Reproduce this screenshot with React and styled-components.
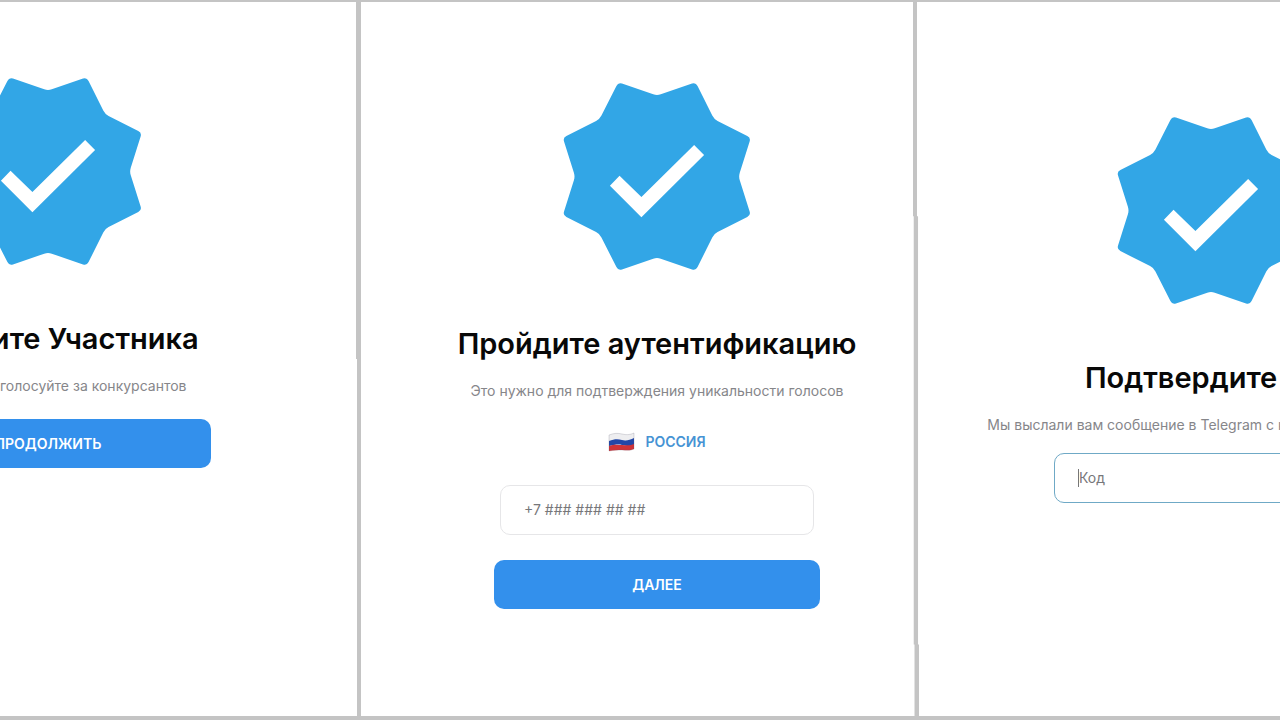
import styled, { createGlobalStyle } from "styled-components"

const GlobalStyle = createGlobalStyle`
  * {
    box-sizing: border-box;
  }
  body {
    margin: 0;
    background-color: #fff;
    font-family: Inter, "Liberation Sans", sans-serif;
  }
`

const Board = styled.main`
  display: grid;
  grid-template-columns: minmax(0, 356fr) 5px minmax(0, 552fr) 6px minmax(0, 361fr);
  min-height: 100vh;
  width: 100%;
  overflow: hidden;
  border-top: 2px solid #c4c4c4;
  border-bottom: 4px solid #c4c4c4;
`

const Panel = styled.section`
  display: flex;
  justify-content: ${(p) => p.$justify || "center"};
  padding: ${(p) => p.$padding};
  overflow: hidden;
`

const Divider = styled.div`
  background-color: #c4c4c4;
  clip-path: polygon(${(p) => p.$shape});
`

const Screen = styled.form`
  display: flex;
  flex-direction: column;
  flex: none;
  align-items: center;
  width: 462px;
`

const BadgeIcon = styled.svg`
  width: 188px;
  height: 187px;
`

const Title = styled.h1`
  margin: 55px 0 18px;
  font-size: 29px;
  line-height: 38px;
  font-weight: 600;
  color: #080808;
  white-space: nowrap;
`

const Text = styled.p`
  margin: 0;
  font-size: 14px;
  line-height: 20px;
  color: #86868a;
  white-space: nowrap;
`

const Country = styled.button`
  display: flex;
  align-items: center;
  gap: 10px;
  margin-top: 31px;
  padding: 0;
  border: none;
  background: none;
  font-family: inherit;
  font-size: 14px;
  line-height: 20px;
  font-weight: 600;
  color: #4693d4;
`

const FlagIcon = styled.svg`
  width: 27px;
  height: 20px;
`

const Field = styled.label`
  display: flex;
  align-items: center;
  width: 314px;
  height: 50px;
  margin-top: ${(p) => p.$top};
  padding: 0 23px;
  border: 1px solid ${(p) => (p.$active ? "#6fa9c6" : "#e6e6e8")};
  border-radius: 10px;
`

const Caret = styled.span`
  width: 1px;
  height: 18px;
  background-color: #777;
`

const Input = styled.input`
  flex: 1;
  min-width: 0;
  padding: 0;
  border: none;
  outline: none;
  background: none;
  font-family: inherit;
  font-size: 14px;
  line-height: 20px;
  color: #222;

  &::placeholder {
    color: #77777a;
    opacity: 1;
  }
`

const Button = styled.button`
  width: 326px;
  height: 49px;
  margin-top: ${(p) => p.$top};
  border: none;
  border-radius: 10px;
  background-color: #3390ec;
  font-family: inherit;
  font-size: 14px;
  font-weight: 600;
  color: #fff;
`

const star = [
  [236, 65], [353, 105], [470, 65], [525, 176],
  [636, 232], [599, 349], [636, 466], [525, 522],
  [470, 633], [353, 593], [236, 633], [180, 522],
  [69, 466], [106, 349], [69, 232], [180, 176],
]

// outline of the star with every corner cut by a curve
function roundedPath(points, radius) {
  const towards = (a, b) => {
    const k = radius / Math.hypot(b[0] - a[0], b[1] - a[1])
    return `${a[0] + (b[0] - a[0]) * k} ${a[1] + (b[1] - a[1]) * k}`
  }
  const parts = points.map((p, i) => {
    const prev = points[(i + points.length - 1) % points.length]
    const next = points[(i + 1) % points.length]
    return `${i ? "L" : "M"}${towards(p, prev)} Q${p[0]} ${p[1]} ${towards(p, next)}`
  })
  return parts.join(" ") + "Z"
}

function Badge() {
  return (
    <BadgeIcon viewBox="71 67 564 564" aria-hidden="true">
      <path d={roundedPath(star, 12)} fill="#32a6e6" />
      <path d="M211 377 240 347 306 411 465 254 495 284 306 472Z" fill="#fff" />
    </BadgeIcon>
  )
}

function Flag() {
  return (
    <FlagIcon viewBox="0 0 27 20" aria-hidden="true">
      <path d="M1 3C6 1 10 1 14 2S22 3 26 1V7C22 9 18 8 14 8S6 7 1 9Z" fill="#eeeef0" />
      <path d="M1 9C6 7 10 7 14 8S22 8 26 6V13C22 15 18 14 14 13S6 13 1 14Z" fill="#2347a8" />
      <path d="M1 14C6 12 10 13 14 13S22 14 26 12V17C22 19 18 18 14 18S6 18 1 19Z" fill="#cf3338" />
      <path d="M1 3C6 1 10 1 14 2S22 3 26 1V17C22 19 18 18 14 18S6 18 1 19Z" fill="none" stroke="#55556a" strokeOpacity=".2" />
    </FlagIcon>
  )
}

const dividerLeft = "0 0, 100% 0, 100% 100%, 20% 100%, 20% 50%, 0 50%"
const dividerRight =
  "0 0, 67% 0, 67% 30%, 84% 30%, 84% 90%, 100% 90%, 100% 100%, 25% 100%, 25% 90%, 12% 90%, 12% 30%, 0 30%"

function App() {
  return (
    <>
      <GlobalStyle />
      <Board>
        <Panel $justify="flex-end" $padding="76px 77px 0 0">
          <Screen>
            <Badge />
            <Title>Выберите Участника</Title>
            <Text>Войдите, проголосуйте за конкурсантов</Text>
            <Button type="button" $top="23px">ПРОДОЛЖИТЬ</Button>
          </Screen>
        </Panel>
        <Divider $shape={dividerLeft} />
        <Panel $padding="81px 0 0 40px">
          <Screen>
            <Badge />
            <Title>Пройдите аутентификацию</Title>
            <Text>Это нужно для подтверждения уникальности голосов</Text>
            <Country type="button">
              <Flag />
              РОССИЯ
            </Country>
            <Field $top="33px">
              <Input type="tel" aria-label="Телефон" placeholder="+7 ### ### ## ##" />
            </Field>
            <Button type="button" $top="25px">ДАЛЕЕ</Button>
          </Screen>
        </Panel>
        <Divider $shape={dividerRight} />
        <Panel $justify="flex-start" $padding="115px 0 0 61px">
          <Screen>
            <Badge />
            <Title>Подтвердите код</Title>
            <Text>Мы выслали вам сообщение в Telegram с кодом подтверждения</Text>
            <Field $top="18px" $active>
              <Caret />
              <Input type="text" aria-label="Код" placeholder="Код" />
            </Field>
          </Screen>
        </Panel>
      </Board>
    </>
  )
}

export default App
